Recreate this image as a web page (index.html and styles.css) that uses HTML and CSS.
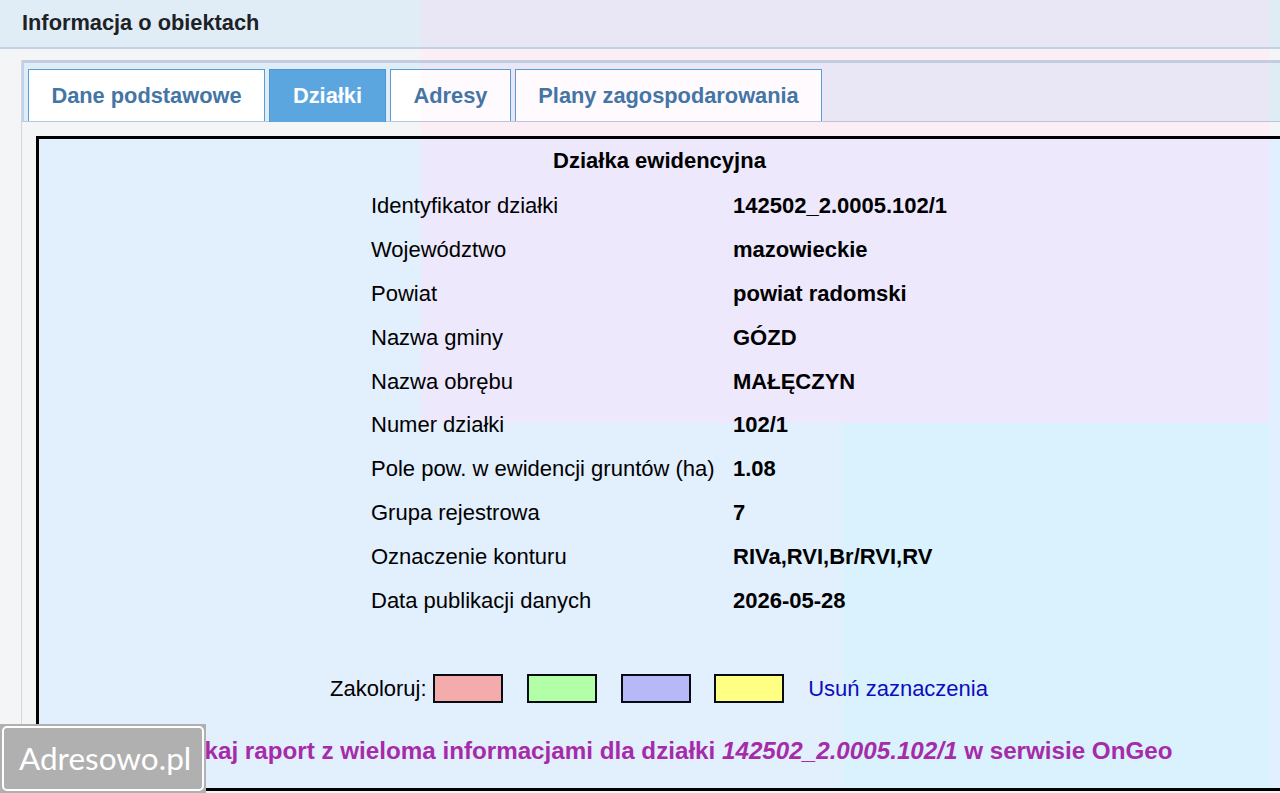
FILE: index.html
```html
<!DOCTYPE html>
<html lang="pl">
<head>
<meta charset="utf-8">
<title>Informacja o obiektach</title>
<link rel="stylesheet" href="styles.css">
</head>
<body>
<header class="header">Informacja o obiektach</header>
<main class="tabs">
  <nav class="tab-bar">
    <a class="tab tab-basic">Dane podstawowe</a>
    <a class="tab tab-active">Działki</a>
    <a class="tab tab-address">Adresy</a>
    <a class="tab tab-plans">Plany zagospodarowania</a>
  </nav>
  <section class="parcel">
    <h1 class="title">Działka ewidencyjna</h1>
    <dl class="data">
      <dt>Identyfikator działki</dt><dd>142502_2.0005.102/1</dd>
      <dt>Województwo</dt><dd>mazowieckie</dd>
      <dt>Powiat</dt><dd>powiat radomski</dd>
      <dt>Nazwa gminy</dt><dd>GÓZD</dd>
      <dt>Nazwa obrębu</dt><dd>MAŁĘCZYN</dd>
      <dt>Numer działki</dt><dd>102/1</dd>
      <dt>Pole pow. w ewidencji gruntów (ha)</dt><dd>1.08</dd>
      <dt>Grupa rejestrowa</dt><dd>7</dd>
      <dt>Oznaczenie konturu</dt><dd>RIVa,RVI,Br/RVI,RV</dd>
      <dt>Data publikacji danych</dt><dd>2026-05-28</dd>
    </dl>
    <div class="colors">
      <span class="colors-label">Zakoloruj:</span>
      <span class="swatch red"></span>
      <span class="swatch green"></span>
      <span class="swatch blue"></span>
      <span class="swatch yellow"></span>
      <a class="clear">Usuń zaznaczenia</a>
    </div>
    <p class="report">kaj raport z wieloma informacjami dla działki <em>142502_2.0005.102/1</em> w serwisie OnGeo</p>
  </section>
</main>
<div class="watermark"><span class="watermark-box">Adresowo.pl</span></div>
</body>
</html>
```
FILE: styles.css
```css
* { box-sizing: border-box; }
html, body { margin: 0; height: 793px; overflow: hidden; }
body {
  font: 22px/26px "Liberation Sans", Arial, sans-serif;
  color: #000;
  background: linear-gradient(90deg, #f4f5f7 421px, #fbeff5 421px, #fbeff5 1270px, #f4f5f7 1270px) 0 0 / 100% 422px no-repeat, #f4f5f7;
}
.header {
  height: 49px;
  padding: 10px 22px 0;
  border-bottom: 2px solid #c2d1e7;
  background: linear-gradient(90deg, #e0edf6 421px, #e9e6f5 421px, #e9e6f5 1270px, #deecf4 1270px) fixed;
  color: #1d2226;
  font-size: 21.8px;
  font-weight: bold;
}
.tabs {
  width: 1275px;
  height: 750px;
  margin: 11px 0 0 21px;
  border-left: 1px solid #d4d6da;
}
.tab-bar {
  display: flex;
  height: 62px;
  padding: 6px 0 0 4px;
  gap: 4px;
  border-top: 3px solid #c3cce0;
  border-left: 2px solid #c0d2eb;
  border-bottom: 1px solid #b4c6e0;
  background: linear-gradient(90deg, #dfedf7 421px, #e9e6f5 421px, #e9e6f5 1270px, #deecf4 1270px) fixed;
}
.tab {
  height: 52px;
  padding-top: 13px;
  border: 1px solid #5b9dd2;
  border-bottom: 0;
  text-align: center;
  font-size: 21.8px;
  font-weight: bold;
  color: #4475a4;
  background: linear-gradient(90deg, #fff 421px, #fefafe 421px) fixed;
}
.tab-basic { width: 237px; }
.tab-active { width: 117px; height: 53px; background: #5ba6df; border-color: #4f94d5; color: #fff; }
.tab-address { width: 121px; }
.tab-plans { width: 307px; }
.parcel {
  width: 1247px;
  height: 655px;
  margin: 14px 0 0 14px;
  border: 3px solid #000;
  background:
    linear-gradient(90deg, #e2effd 421px, #ede8fc 421px, #ede8fc 1270px, #e2effe 1270px) fixed 0 0 / 100% 423px no-repeat,
    linear-gradient(90deg, #e2effd 843px, #d9f2fe 843px, #d9f2fe 1270px, #e2effe 1270px) fixed;
}
.title { margin: 9px 0 0; font: inherit; font-weight: bold; text-align: center; }
.data {
  display: grid;
  grid-template-columns: 362px 215px;
  grid-auto-rows: 43.8px;
  align-items: center;
  justify-content: center;
  margin: 10.6px 0 0;
}
.data dt, .data dd { margin: 0; white-space: nowrap; }
.data dd { font-weight: bold; }
.colors { display: flex; align-items: center; height: 30px; margin: 51.4px 0 0 291px; }
.colors-label { width: 103px; }
.swatch { width: 70px; height: 29px; margin-right: 23.8px; border: 2px solid #080c12; }
.red { background: #f4abab; }
.green { background: #b2ffa8; }
.blue { background: #b7b8f8; }
.yellow { background: #ffff84; }
.clear { color: #0d0dbd; }
.report { margin: 34px 0 0; padding-left: 165.5px; font-size: 24.2px; font-weight: bold; color: #a62ba9; white-space: nowrap; }
.watermark {
  position: absolute;
  left: 0;
  bottom: 0;
  width: 206px;
  height: 69px;
  padding: 2px;
  background: #b0b0b0;
}
.watermark-box {
  display: block;
  width: 202px;
  height: 65px;
  padding: 11px 0 0 15px;
  border: 2px solid #fff;
  border-radius: 5px;
  font: 31.5px/38px Lato, sans-serif;
  color: #fff;
}
```
